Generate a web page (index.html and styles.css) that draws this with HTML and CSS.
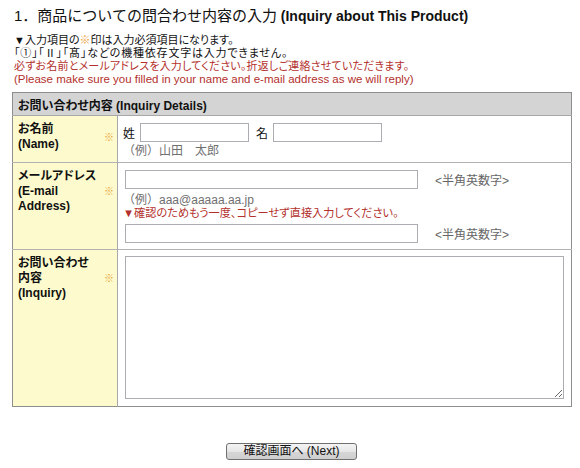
FILE: index.html
```html
<!DOCTYPE html>
<html lang="ja">
<head>
<meta charset="utf-8">
<title>お問い合わせ</title>
<link rel="stylesheet" href="styles.css">
</head>
<body>
<div class="page">
  <h1 class="title"><span class="title-jp">1．商品についての問合わせ内容の入力</span> <span class="title-en">(Inquiry about This Product)</span></h1>
  <div class="notes">
    <p>▼入力項目の<span class="mark">※</span>印は入力必須項目になります。</p>
    <p class="n2">「①」「Ⅱ」「髙」などの機種依存文字は入力できません。</p>
    <p class="red n3">必ずお名前とメールアドレスを入力してください。折返しご連絡させていただきます。</p>
    <p class="red en">(Please make sure you filled in your name and e-mail address as we will reply)</p>
  </div>

  <table class="form">
    <colgroup><col class="c-label"><col></colgroup>
    <tr class="head"><th colspan="2">お問い合わせ内容 (Inquiry Details)</th></tr>
    <tr>
      <td class="label"><div class="label-in"><span>お名前<br>(Name)</span><span class="mark">※</span></div></td>
      <td class="field">
        <div class="name-row"><span>姓</span><input type="text" class="in-name"><span class="mei">名</span><input type="text" class="in-name"></div>
        <div class="example ex-name">（例）山田　太郎</div>
      </td>
    </tr>
    <tr>
      <td class="label"><div class="label-in"><span>メールアドレス<br>(E-mail<br>Address)</span><span class="mark">※</span></div></td>
      <td class="field">
        <div class="mail-row"><input type="text" class="in-mail"><span class="hint">&lt;半角英数字&gt;</span></div>
        <div class="example ex-mail">（例）aaa@aaaaa.aa.jp</div>
        <div class="red confirm">▼確認のためもう一度、コピーせず直接入力してください。</div>
        <div class="mail-row again"><input type="text" class="in-mail"><span class="hint">&lt;半角英数字&gt;</span></div>
      </td>
    </tr>
    <tr>
      <td class="label"><div class="label-in"><span>お問い合わせ<br>内容<br>(Inquiry)</span><span class="mark">※</span></div></td>
      <td class="field field-area"><textarea class="in-area"></textarea></td>
    </tr>
  </table>

  <div class="actions"><button type="button" class="btn">確認画面へ (Next)</button></div>
</div>
</body>
</html>
```

FILE: styles.css
```css
html, body {
  margin: 0;
  padding: 0;
  background: #ffffff;
}
body {
  font-family: "Liberation Sans", "Noto Sans CJK JP", sans-serif;
  font-size: 12px;
  color: #111;
  font-feature-settings: "palt";
}
.page {
  padding: 6px 9px 0 12px;
}
.title {
  margin: 0;
  line-height: 20px;
  font-size: 14px;
  color: #111;
  font-feature-settings: normal;
}
.title-jp {
  font-weight: normal;
  font-size: 15px;
  padding-left: 2px;
}
.title-en {
  font-weight: bold;
}
.notes {
  margin-top: 8px;
  font-size: 11px;
}
.notes p {
  margin: 0;
  line-height: 13px;
  padding-left: 2px;
}
.notes .n2 {
  letter-spacing: 0.8px;
}
.notes .n3 {
  letter-spacing: 0.2px;
}
.notes .en {
  font-size: 11.5px;
  letter-spacing: 0;
}
.red {
  color: #b3302c;
}
.mark {
  color: #e8a23a;
}
.form {
  margin-top: 6px;
  width: 560px;
  border-collapse: collapse;
  border: 1px solid #8e8e8e;
}
.c-label {
  width: 106px;
}
.head th {
  background: #d4d4d4;
  text-align: left;
  font-weight: bold;
  height: 22px;
  padding: 0 5px;
  border-bottom: 1px solid #a8a8a8;
}
.form td {
  border-top: 1px solid #b2b2b2;
  vertical-align: top;
}
.label {
  background: #fdfbcd;
  border-right: 1px solid #a8a8a8;
  padding: 6px 3px 0 5px;
  font-weight: bold;
  line-height: 15px;
}
.label-in {
  display: flex;
  align-items: center;
  justify-content: space-between;
}
.label .mark {
  font-weight: normal;
  font-size: 10px;
}
.field {
  padding: 7px 7px 4px 5px;
}
.name-row, .mail-row {
  display: flex;
  align-items: center;
  height: 19px;
}
input, textarea {
  box-sizing: border-box;
  border: 1px solid #abadb3;
  background: #fff;
  margin: 0;
  font-family: inherit;
}
.name-row span {
  margin-right: 5px;
}
.name-row .mei {
  margin-left: 7px;
}
.in-name {
  width: 109px;
  height: 19px;
}
.in-mail {
  width: 293px;
  height: 19px;
  margin-left: 2px;
}
.hint {
  color: #666;
  margin-left: 17px;
}
.example {
  color: #707070;
  line-height: 13px;
  font-feature-settings: normal;
}
.ex-name {
  margin-top: 3px;
}
.ex-mail {
  margin-top: 5px;
}
.field .confirm {
  line-height: 13px;
  font-size: 11.2px;
}
.mail-row.again {
  margin-top: 4px;
  margin-bottom: 2px;
}
.field-area {
  padding: 6px 7px 7px 5px;
}
.in-area {
  display: block;
  width: 439px;
  height: 143px;
  margin-left: 2px;
  resize: both;
}
.actions {
  margin-top: 36px;
  display: flex;
  justify-content: center;
}
.btn {
  width: 131px;
  height: 17px;
  padding: 0;
  font-family: inherit;
  font-size: 12px;
  line-height: 15px;
  color: #111;
  border: 1px solid #707070;
  border-radius: 3px;
  background: linear-gradient(#f4f4f4, #e6e6e6 50%, #d6d6d6 51%, #cfcfcf);
}
```
